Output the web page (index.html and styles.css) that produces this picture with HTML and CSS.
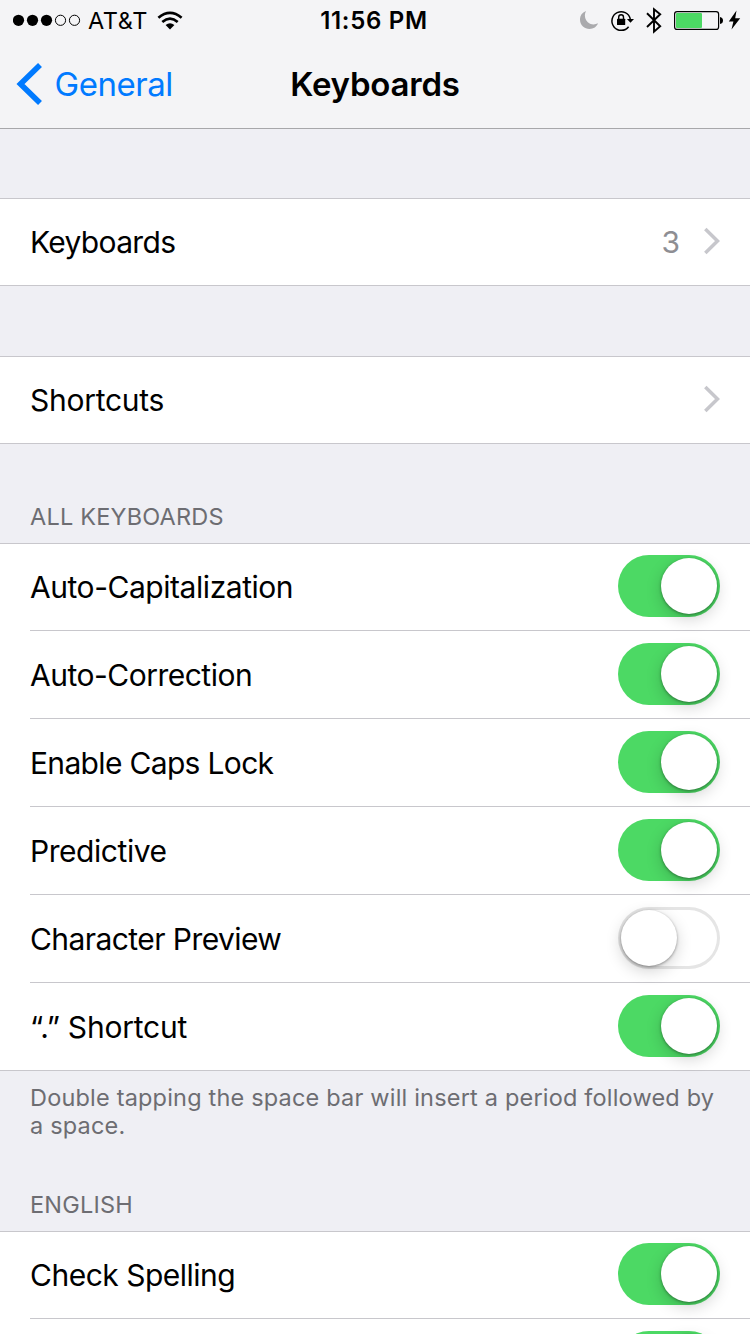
FILE: index.html
```html
<!DOCTYPE html>
<html lang="en">
<head>
<meta charset="utf-8">
<title>Keyboards</title>
<link rel="stylesheet" href="styles.css">
</head>
<body>
<div class="screen">
  <header class="header">
    <div class="status">
      <div class="status-left">
        <svg class="signal" width="68" height="12" viewBox="0 0 68 12">
          <circle cx="5.500" cy="6.300" r="5.600"/><circle cx="19.500" cy="6.300" r="5.600"/><circle cx="33.500" cy="6.300" r="5.600"/>
          <g fill="none" stroke="#000" stroke-width="1"><circle cx="47.500" cy="6.300" r="5.100"/><circle cx="61.500" cy="6.300" r="5.100"/></g>
        </svg>
        <span class="carrier">AT&amp;T</span>
        <svg class="wifi" width="26" height="19" viewBox="0 0 26 19">
          <g fill="none" stroke="#000" stroke-width="2.7"><path d="M1.4 6.8Q13-2.9 24.6 6.8"/><path d="M5.3 11Q13 4.4 20.7 11"/></g>
          <path d="M8.6 14Q13 10.6 17.4 14L13 18.4Z"/>
        </svg>
      </div>
      <span class="clock">11:56 PM</span>
      <div class="status-right">
        <svg width="162" height="30" viewBox="580 5 162 30">
          <path fill="#aaaaad" d="M586 11C581.500 12.800 579.800 16.300 580 20C580.300 25.300 584.500 29 589.500 29C593.500 29 596.800 26.700 598 23.300C595.500 24.600 592.700 24.800 590 23.700C585.300 21.700 583.500 15.800 586 11Z"/>
          <path fill="none" stroke="#000" stroke-width="1.5" d="M628.600 26.700A9.300 9.300 0 1 1 630.300 19"/>
          <path d="M626.900 18.900H634L630.500 22.800Z"/>
          <rect x="617" y="18.700" width="8.200" height="6.400" rx=".6"/>
          <path fill="none" stroke="#000" stroke-width="1.400" d="M618.700 19V17.200A2.400 2.400 0 0 1 623.500 17.200V19"/>
          <path fill="none" stroke="#000" stroke-width="1.900" d="M647 13.200L660.200 26.200L654 31.600V9.200L660.200 14.200L647 27"/>
          <rect x="674.600" y="11.600" width="44" height="17.800" rx="2.500" fill="none" stroke="#000" stroke-width="1.200"/>
          <rect x="676" y="13" width="26" height="15" rx="1" fill="#4cd964"/>
          <path d="M720 17Q723 17.500 723 20.500T720 24Z"/>
          <path d="M736.500 10.500L728.800 21.500H733.400L731.500 29.500L740.200 18.300H735.200Z"/>
        </svg>
      </div>
    </div>
    <nav class="nav">
      <a class="back">
        <svg width="26" height="42" viewBox="0 0 26 42"><path d="M24 2L4.500 21L24 40" fill="none" stroke="#007aff" stroke-width="5.600"/></svg>
        <span class="back-label">General</span>
      </a>
      <h1 class="title">Keyboards</h1>
    </nav>
  </header>
  <main>
    <section class="group">
      <div class="row"><span class="label l-keyboards">Keyboards</span><span class="value">3</span><svg class="chevron" width="17" height="28" viewBox="0 0 17 28"><path d="M2.300 2L14.500 14L2.300 26" fill="none" stroke="#c7c7cc" stroke-width="3.500"/></svg></div>
    </section>
    <section class="group">
      <div class="row"><span class="label l-shortcuts">Shortcuts</span><svg class="chevron" width="17" height="28" viewBox="0 0 17 28"><path d="M2.300 2L14.500 14L2.300 26" fill="none" stroke="#c7c7cc" stroke-width="3.500"/></svg></div>
    </section>
    <h2 class="heading">ALL KEYBOARDS</h2>
    <section class="group listed">
      <div class="row"><span class="label l-cap">Auto-Capitalization</span><span class="toggle on"></span></div>
      <div class="row"><span class="label l-corr">Auto-Correction</span><span class="toggle on"></span></div>
      <div class="row"><span class="label l-caps">Enable Caps Lock</span><span class="toggle on"></span></div>
      <div class="row"><span class="label l-pred">Predictive</span><span class="toggle on"></span></div>
      <div class="row"><span class="label l-char">Character Preview</span><span class="toggle"></span></div>
      <div class="row"><span class="label l-dot"><span class="quotes">“.”</span> Shortcut</span><span class="toggle on"></span></div>
    </section>
    <p class="note"><span class="note-a">Double tapping the space bar will insert a period followed by</span><br><span class="note-b">a space.</span></p>
    <h2 class="heading second">ENGLISH</h2>
    <section class="group listed">
      <div class="row"><span class="label l-check">Check Spelling</span><span class="toggle on"></span></div>
      <div class="row"><span class="label"></span><span class="toggle on"></span></div>
    </section>
  </main>
</div>
</body>
</html>
```
FILE: styles.css
```css
* { box-sizing: border-box; }
body { margin: 0; }
.screen {
  width: 750px; height: 1334px; overflow: hidden;
  background: #efeff4; color: #000;
  font-family: Inter, "Liberation Sans", sans-serif;
}
.header { height: 129px; background: #f4f4f6; border-bottom: 1px solid #a7a7aa; }
.status { height: 40px; display: grid; grid-template-columns: 1fr auto 1fr; grid-template-rows: 40px; align-items: center; padding: 0 8px 0 6px; }
.status-left { display: flex; align-items: center; margin-left: 7px; }
.carrier { font-size: 23.500px; line-height: 38px; margin-left: 7px; width: 62px; margin-right: 7px; padding-top: 2px; letter-spacing: .6px; white-space: nowrap; }
.clock { font-size: 24px; line-height: 38px; font-weight: 600; padding-top: 2px; letter-spacing: .7px; }
.status-right { display: flex; justify-content: flex-end; }
.status svg { display: block; flex: none; }
.nav { height: 88px; display: grid; grid-template-columns: 1fr auto 1fr; align-items: center; }
.back { display: flex; align-items: center; padding-left: 16px; color: #007aff; }
.back-label { font-size: 33px; margin-left: 12.500px; letter-spacing: -.45px; }
.title { margin: 0; font-size: 33px; font-weight: 600; letter-spacing: -.2px; }
.group { margin-top: 69px; background: #fff; border-top: 1px solid #c8c7cc; }
.group + .group { margin-top: 70px; }
.row {
  height: 88px; display: flex; align-items: center; padding: 0 30px 2px 0; margin-left: 30px;
  border-bottom: 1px solid #c8c7cc;
}
.row:first-child { height: 87px; }
.group:not(.listed) .row, .row:last-child { margin-left: 0; padding-left: 30px; }
.label, .value { align-self: flex-start; font-size: 30px; line-height: 37px; padding-top: 26px; }
.row:first-child .label, .row:first-child .value { padding-top: 25px; }
.label { flex: 1; letter-spacing: -.5px; white-space: nowrap; }
.l-keyboards, .l-caps { letter-spacing: -.67px; }
.l-shortcuts { letter-spacing: -.26px; }
.l-cap, .l-pred { letter-spacing: -.45px; }
.l-char { letter-spacing: -.57px; }
.l-dot { letter-spacing: -.2px; }
.quotes { letter-spacing: -.4px; }
.value { color: #8e8e93; margin-right: 23px; }
.toggle {
  width: 102px; height: 62px; border-radius: 31px; padding: 3px; flex: none;
  display: flex; box-shadow: inset 0 0 0 3px #e5e5e5;
}
.toggle::before {
  content: ""; width: 56px; height: 56px; border-radius: 50%; background: #fff;
  box-shadow: 0 1px 3px rgba(0,0,0,.38), 0 5px 16px rgba(0,0,0,.18);
}
.toggle.on { background: #4cd964; box-shadow: none; justify-content: flex-end; }
.heading { margin: 59px 0 0; padding-left: 30px; height: 40px; font-size: 23.500px; line-height: 28px; font-weight: 400; letter-spacing: .2px; color: #6d6d72; }
.heading + .group { margin-top: 0; }
.note { margin: 13px 0 0; padding-left: 30px; font-size: 23.500px; line-height: 28px; letter-spacing: .19px; color: #6d6d72; white-space: nowrap; }
.heading.second { margin-top: 51px; }
```
